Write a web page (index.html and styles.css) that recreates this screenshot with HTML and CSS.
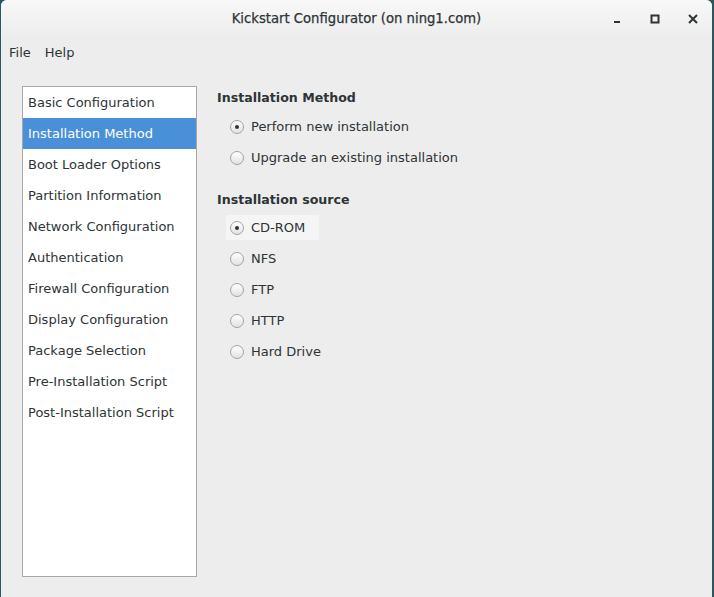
FILE: index.html
```html
<!DOCTYPE html>
<html>
<head>
<meta charset="utf-8">
<link rel="stylesheet" href="styles.css">
</head>
<body>
<div class="window">
  <div class="titlebar">
    <div class="title">Kickstart Configurator (on ning1.com)</div>
    <div class="controls">
      <span class="ctl min"><svg width="10" height="10" viewBox="0 0 10 10"><rect x="2" y="7" width="6" height="2" fill="#2e3436"/></svg></span>
      <span class="ctl max"><svg width="10" height="10" viewBox="0 0 10 10"><rect x="1.5" y="1.5" width="7" height="7" fill="none" stroke="#2e3436" stroke-width="2"/></svg></span>
      <span class="ctl close"><svg width="10" height="10" viewBox="0 0 10 10"><path d="M1 1L9 9M9 1L1 9" stroke="#2e3436" stroke-width="2"/></svg></span>
    </div>
  </div>
  <div class="menubar">
    <span class="menu">File</span>
    <span class="menu">Help</span>
  </div>
  <div class="content">
    <div class="sidebar">
      <div class="item">Basic Configuration</div>
      <div class="item selected">Installation Method</div>
      <div class="item">Boot Loader Options</div>
      <div class="item">Partition Information</div>
      <div class="item">Network Configuration</div>
      <div class="item">Authentication</div>
      <div class="item">Firewall Configuration</div>
      <div class="item">Display Configuration</div>
      <div class="item">Package Selection</div>
      <div class="item">Pre-Installation Script</div>
      <div class="item">Post-Installation Script</div>
    </div>
    <div class="panel">
      <div class="heading">Installation Method</div>
      <div class="group first">
        <div class="radio"><span class="circle checked"></span><span>Perform new installation</span></div>
        <div class="radio"><span class="circle"></span><span>Upgrade an existing installation</span></div>
      </div>
      <div class="heading second">Installation source</div>
      <div class="group">
        <div class="radio hover"><span class="circle checked"></span><span>CD-ROM</span></div>
        <div class="radio"><span class="circle"></span><span>NFS</span></div>
        <div class="radio"><span class="circle"></span><span>FTP</span></div>
        <div class="radio"><span class="circle"></span><span>HTTP</span></div>
        <div class="radio"><span class="circle"></span><span>Hard Drive</span></div>
      </div>
    </div>
  </div>
</div>
</body>
</html>
```
FILE: styles.css
```css
html, body {
  margin: 0;
  padding: 0;
  height: 100%;
}
body {
  background: #2a5766;
  font-family: "DejaVu Sans", sans-serif;
  font-size: 13px;
  color: #2e3436;
  overflow: hidden;
}
.window {
  margin-left: 1px;
  width: 711px;
  height: 597px;
  background: #ededed;
  border-radius: 6px 6px 0 0;
  overflow: hidden;
  display: flex;
  flex-direction: column;
}
.titlebar {
  height: 37px;
  flex: none;
  position: relative;
  background: linear-gradient(#f8f8f8, #ededed);
  display: flex;
  align-items: center;
  justify-content: center;
}
.title {
  font-size: 13.2px;
  color: #2e3436;
  -webkit-text-stroke: 0.25px #2e3436;
}
.controls {
  position: absolute;
  right: 0;
  top: 0;
  height: 37px;
  display: flex;
  align-items: center;
}
.ctl {
  width: 38px;
  display: flex;
  justify-content: center;
  align-items: center;
}
.ctl svg { display: block; }
.menubar {
  height: 30px;
  flex: none;
  display: flex;
  align-items: center;
  padding-left: 8px;
  gap: 14px;
}
.content {
  display: flex;
  padding: 19px 0 0 21px;
}
.sidebar {
  width: 173px;
  height: 489px;
  background: #ffffff;
  border: 1px solid #a8a8a8;
  flex: none;
}
.item {
  height: 31px;
  line-height: 31px;
  padding-left: 5px;
  white-space: nowrap;
}
.item.selected {
  background: #4a90d9;
  color: #ffffff;
}
.panel {
  padding-left: 20px;
  padding-top: 2px;
}
.heading {
  font-weight: bold;
  font-size: 12.6px;
  height: 20px;
  line-height: 20px;
}
.heading.second {
  margin-top: 20px;
}
.group {
  padding-left: 9px;
  padding-top: 5px;
}
.group.first {
  padding-top: 6px;
}
.radio {
  height: 25px;
  margin-bottom: 6px;
  display: flex;
  align-items: center;
  gap: 7px;
  padding: 0 8px 0 4px;
  width: max-content;
}
.radio.hover {
  background: #f5f5f5;
  padding-right: 14px;
}
.circle {
  width: 12px;
  height: 12px;
  border-radius: 50%;
  border: 1px solid #a3a3a3;
  background: linear-gradient(#ffffff, #e2e2e2);
  position: relative;
  flex: none;
}
.circle.checked::after {
  content: "";
  position: absolute;
  left: 4px;
  top: 4px;
  width: 4px;
  height: 4px;
  border-radius: 50%;
  background: #2e3436;
}
```
